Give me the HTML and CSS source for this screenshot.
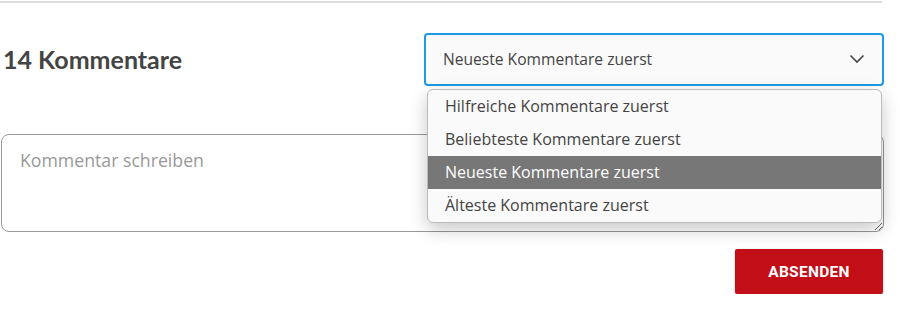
FILE: index.html
```html
<!DOCTYPE html>
<html lang="de">
<head>
<meta charset="utf-8">
<link rel="stylesheet" href="styles.css">
</head>
<body>
<div class="page">
  <div class="rule"></div>
  <div class="header">
    <h2 class="title">14 Kommentare</h2>
    <div class="select-wrap">
      <div class="select">
        <span>Neueste Kommentare zuerst</span>
        <svg class="chev" width="16" height="10" viewBox="0 0 16 10"><polyline points="1.5,1.5 8,8 14.5,1.5" fill="none" stroke="#444" stroke-width="1.6"/></svg>
      </div>
      <ul class="menu">
        <li>Hilfreiche Kommentare zuerst</li>
        <li>Beliebteste Kommentare zuerst</li>
        <li class="active">Neueste Kommentare zuerst</li>
        <li>Älteste Kommentare zuerst</li>
      </ul>
    </div>
  </div>
  <textarea class="comment" placeholder="Kommentar schreiben"></textarea>
  <div class="actions">
    <button class="send">ABSENDEN</button>
  </div>
</div>
</body>
</html>
```
FILE: styles.css
```css
* { box-sizing: border-box; }
html, body { margin: 0; padding: 0; background: #fff; }
body { font-family: "Open Sans", "Lato", sans-serif; color: #444; }
.page { width: 884px; padding-top: 1px; }
.rule { width: 882px; height: 2px; background: #ddd; }
.header {
  display: flex;
  justify-content: space-between;
  align-items: center;
  margin-top: 30px;
}
.title {
  margin: 0 0 2px 3px;
  font-family: "Lato", sans-serif;
  font-weight: 700;
  font-size: 25px;
  color: #444;
}
.select-wrap { position: relative; width: 460px; }
.select {
  height: 53px;
  border: 2px solid #1a9be3;
  border-radius: 4px;
  background: #fafafa;
  display: flex;
  align-items: center;
  justify-content: space-between;
  padding: 0 17px 1px 17px;
  font-size: 15.6px;
  color: #444;
}
.chev { display: block; }
.menu {
  position: absolute;
  top: 56px;
  left: 3px;
  right: 2px;
  margin: 0;
  padding: 0;
  list-style: none;
  background: #fafafa;
  border: 1px solid #bbb;
  border-radius: 6px;
  box-shadow: 0 6px 18px rgba(0,0,0,0.22);
  overflow: hidden;
  z-index: 5;
}
.menu li {
  height: 33px;
  line-height: 32px;
  padding-left: 17px;
  font-size: 16px;
  color: #444;
}
.menu li.active { background: #777; color: #fff; }
.comment {
  display: block;
  margin: 48px 0 0 1px;
  width: 883px;
  height: 98px;
  border: 1px solid #999;
  border-radius: 8px;
  padding: 13px 18px;
  font-family: "Open Sans", "Lato", sans-serif;
  font-size: 17.7px;
  color: #444;
  background: #fff;
}
.comment::placeholder { color: #999; }
.actions {
  display: flex;
  justify-content: flex-end;
  margin-top: 17px;
  padding-right: 1px;
}
.send {
  width: 148px;
  height: 45px;
  border: none;
  border-radius: 2px;
  background: #c20e17;
  color: #fff;
  font-family: "Roboto", sans-serif;
  font-weight: 700;
  font-size: 15.5px;
  letter-spacing: 0.3px;
  box-shadow: 0 1px 3px rgba(0,0,0,0.2);
}
```
